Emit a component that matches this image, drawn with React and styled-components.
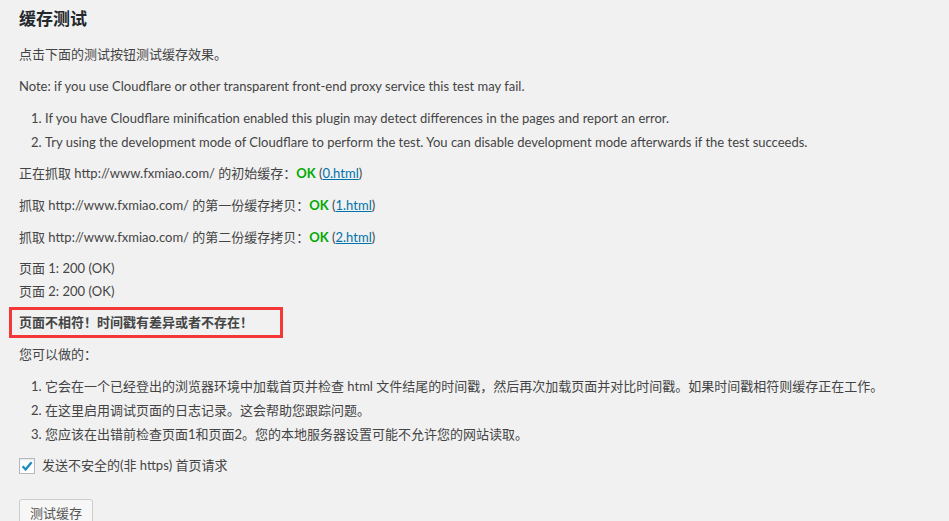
import styled, { createGlobalStyle } from 'styled-components';

const GlobalStyle = createGlobalStyle`
  html, body {
    margin: 0;
    background: #f1f1f1;
  }

  body {
    color: #444;
    font-family: Lato, "Noto Sans CJK SC", sans-serif;
    font-size: 13px;
    line-height: 1.4em;
  }
`;

const Wrap = styled.div`
  padding: 8px 19px 0;
  height: 521px;
  box-sizing: border-box;
  overflow: hidden;
`;

const Title = styled.h2`
  margin: 0 0 15px;
  font-size: 17px;
  line-height: 22px;
  font-weight: 700;
  color: #23282d;
`;

const Text = styled.p`
  margin: 13px 0;
  line-height: 19px;
`;

const Alert = styled(Text)`
  position: relative;
  font-weight: 700;

  &::after {
    content: '';
    position: absolute;
    left: -10px;
    top: -6px;
    width: 274px;
    height: 31px;
    box-sizing: border-box;
    border: 3px solid #f43838;
  }
`;

const Steps = styled.ol`
  margin: 0 0 0 26px;
  padding: 0;
  list-style: decimal;

  li {
    margin-bottom: 6px;
    line-height: 18px;
  }
`;

const StatusList = styled.ul`
  margin: 0;
  padding: 0;
  list-style: none;

  li {
    margin-bottom: 6px;
    line-height: 17px;
  }
`;

const Ok = styled.strong`
  color: #0a0;
  font-weight: 700;
`;

const FileLink = styled.a`
  color: #0073aa;
  text-decoration: underline;
`;

const CheckRow = styled.label`
  display: flex;
  align-items: center;
  gap: 7px;
  cursor: pointer;
`;

const CheckBox = styled.span`
  width: 16px;
  height: 16px;
  box-sizing: border-box;
  border: 1px solid #b4b9be;
  background: #fff;
  box-shadow: inset 0 1px 2px rgba(0, 0, 0, 0.1);
  display: flex;
  align-items: center;
  justify-content: center;
`;

const ButtonRow = styled.div`
  margin-top: 24px;
`;

const Button = styled.button`
  height: 28px;
  padding: 0 10px 1px;
  font-family: inherit;
  font-size: 13px;
  line-height: 26px;
  color: #555;
  background: #f7f7f7;
  border: 1px solid #ccc;
  border-radius: 3px;
  box-shadow: 0 1px 0 #ccc;
  cursor: pointer;
`;

const fetches = [
  { label: '正在抓取 http://www.fxmiao.com/ 的初始缓存：', file: '0.html' },
  { label: '抓取 http://www.fxmiao.com/ 的第一份缓存拷贝：', file: '1.html' },
  { label: '抓取 http://www.fxmiao.com/ 的第二份缓存拷贝：', file: '2.html' },
];

export default function App() {
  return (
    <Wrap>
      <GlobalStyle />
      <Title>缓存测试</Title>
      <Text>点击下面的测试按钮测试缓存效果。</Text>
      <Text>Note: if you use Cloudflare or other transparent front-end proxy service this test may fail.</Text>
      <Steps>
        <li>If you have Cloudflare minification enabled this plugin may detect differences in the pages and report an error.</li>
        <li>Try using the development mode of Cloudflare to perform the test. You can disable development mode afterwards if the test succeeds.</li>
      </Steps>
      {fetches.map((f) => (
        <Text key={f.file}>
          {f.label}<Ok>OK</Ok> (<FileLink href="#">{f.file}</FileLink>)
        </Text>
      ))}
      <StatusList>
        <li>页面 1: 200 (OK)</li>
        <li>页面 2: 200 (OK)</li>
      </StatusList>
      <Alert>页面不相符！时间戳有差异或者不存在！</Alert>
      <Text>您可以做的：</Text>
      <Steps>
        <li>它会在一个已经登出的浏览器环境中加载首页并检查 html 文件结尾的时间戳，然后再次加载页面并对比时间戳。如果时间戳相符则缓存正在工作。</li>
        <li>在这里启用调试页面的日志记录。这会帮助您跟踪问题。</li>
        <li>您应该在出错前检查页面1和页面2。您的本地服务器设置可能不允许您的网站读取。</li>
      </Steps>
      <Text as="div">
        <CheckRow>
          <CheckBox>
            <svg width="14" height="14" viewBox="0 0 14 14">
              <path d="M2.6 7.2 L5.6 10.4 L11.6 3.2" fill="none" stroke="#1e8cbe" strokeWidth="2.3" />
            </svg>
          </CheckBox>
          发送不安全的(非 https) 首页请求
        </CheckRow>
      </Text>
      <ButtonRow>
        <Button>测试缓存</Button>
      </ButtonRow>
    </Wrap>
  );
}
